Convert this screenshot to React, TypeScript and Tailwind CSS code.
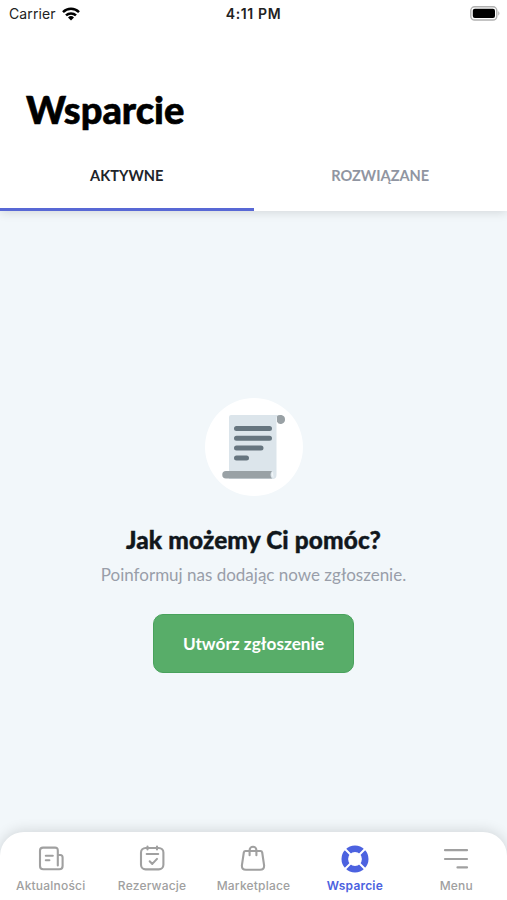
import { useState, type ReactNode } from "react";

const tabs = ["AKTYWNE", "ROZWIĄZANE"];

const NewsIcon = () => (
  <svg width="28" height="28" viewBox="0 0 28 28" fill="none" stroke="currentColor" strokeWidth="2.1" strokeLinecap="round" strokeLinejoin="round">
    <path d="M20.8 20.5V5.4Q20.8 2.6 18 2.6H6Q3 2.6 3 5.6V21Q3 24.3 6.3 24.3H22.3Q25.6 24.3 25.6 21V12.5Q25.6 10 23.2 10H20.8" />
    <path d="M8.8 10.7h7M8.8 15.3h3.600" />
  </svg>
);

const CalendarIcon = () => (
  <svg width="28" height="28" viewBox="0 0 28 28" fill="none" stroke="currentColor" strokeWidth="2.1" strokeLinecap="round" strokeLinejoin="round">
    <rect x="3" y="3" width="22.4" height="21.4" rx="4.6" />
    <path d="M9.500 1.500v3M19 1.500v3M8.700 9h11.500M11.700 16.300l2.600 2.600 4.700-5" />
  </svg>
);

const BagIcon = () => (
  <svg width="28" height="28" viewBox="0 0 28 28" fill="none" stroke="currentColor" strokeWidth="2.1" strokeLinecap="round" strokeLinejoin="round">
    <path d="M6.500 6h15q1.400 0 1.700 1.500l1.900 12.800q.3 4.500-4.100 4.500H7q-4.400 0-4.100-4.500L4.800 7.500Q5.100 6 6.500 6Z" />
    <path d="M10.600 10.300V5.200a3.400 3.400 0 0 1 6.800 0v5.100" />
  </svg>
);

const LifebuoyIcon = () => (
  <svg width="28" height="28" viewBox="0 0 28 28" fill="none">
    <circle cx="14" cy="14" r="10.2" stroke="currentColor" strokeWidth="6.6" />
    <path d="M4 4l6.5 6.5M24 4l-6.5 6.5M4 24l6.5-6.5M24 24l-6.5-6.5" stroke="#fff" strokeWidth="2" />
  </svg>
);

const MenuIcon = () => (
  <svg width="28" height="28" viewBox="0 0 28 28" fill="none" stroke="currentColor" strokeWidth="2.2" strokeLinecap="round">
    <path d="M3 5.200h22M3 14h22M15.500 22.400h9.500" />
  </svg>
);

const navItems: { name: string; icon: ReactNode }[] = [
  { name: "Aktualności", icon: <NewsIcon /> },
  { name: "Rezerwacje", icon: <CalendarIcon /> },
  { name: "Marketplace", icon: <BagIcon /> },
  { name: "Wsparcie", icon: <LifebuoyIcon /> },
  { name: "Menu", icon: <MenuIcon /> },
];

function StatusBar() {
  return (
    <div className="grid h-[27px] grid-cols-3 items-center font-['Inter',sans-serif] text-[14px] text-[#222]">
      <div className="flex items-center gap-[6px] pl-[9px]">
        <span className="tracking-[0.1px]">Carrier</span>
        <svg width="18" height="14" viewBox="0 0 18 14" fill="none" stroke="#000" strokeWidth="2.5">
          <path d="M1 5.1a11.5 11.5 0 0 1 16 0M4 8.4a7.2 7.2 0 0 1 10 0" />
          <path d="M9 13.4 6 10.5a4.3 4.3 0 0 1 6 0Z" fill="#000" stroke="none" />
        </svg>
      </div>
      <span className="text-center font-semibold tracking-[0.6px] whitespace-nowrap">4:11 PM</span>
      <svg className="mr-[6px] justify-self-end" width="31" height="15" viewBox="0 0 31 15">
        <rect x=".8" y=".8" width="26" height="13.2" rx="3.8" fill="#fff" stroke="#b0b0b0" strokeWidth="1.4" />
        <rect x="2.8" y="2.8" width="22.2" height="9.2" rx="2" fill="#000" />
        <path d="M28.3 5q2.3 2.4 0 4.8Z" fill="#aaa" />
      </svg>
    </div>
  );
}

function ScrollIllustration() {
  return (
    <div className="flex size-[98px] items-center justify-center rounded-full bg-white">
      <svg width="64" height="66" viewBox="0 0 64 66">
        <path d="M55 1h4.500q3.500 1 3.500 4.300a4.300 4.300 0 0 1-8 2.500Z" fill="#99a1a5" />
        <path d="M9 1H58q-3.500 0-3.500 4V61q0 4-4 4H7V3q0-2 2-2Z" fill="#dce5eb" />
        <path d="M4 57H50q-3 3.500 0 7.500H4a3.750 3.750 0 0 1 0-7.500Z" fill="#99a1a5" />
        <path d="M51 57.500q-3 3 .5 6.500Z" fill="#f1f6f9" />
        <path d="M14.500 14.500H47.500M14.500 24.300H47.500M14.500 34H39M14.500 44H24.500" stroke="#66757f" strokeWidth="5" strokeLinecap="round" />
      </svg>
    </div>
  );
}

export default function App() {
  const [activeTab, setActiveTab] = useState(0);
  const [activeNav, setActiveNav] = useState("Wsparcie");

  return (
    <div className="flex h-screen flex-col overflow-hidden bg-[#f2f7fa] font-['Lato',sans-serif]">
      <header className="relative h-[211px] shrink-0 bg-white shadow-[0_1px_10px_rgba(0,0,0,0.14)]">
        <StatusBar />
        <h1 className="mt-[59px] pl-[26px] text-[38px] leading-[46px] font-black text-black [-webkit-text-stroke:0.6px_#000]">
          Wsparcie
        </h1>
        <div className="mt-[9px] grid h-[70px] grid-cols-2">
          {tabs.map((tab, i) => (
            <button
              key={tab}
              onClick={() => setActiveTab(i)}
              className={`border-b-[3px] pt-[3px] text-[14.6px] font-bold ${
                activeTab === i ? "border-[#5868d5] text-[#20242a]" : "border-transparent text-[#9095a1]"
              }`}
            >
              {tab}
            </button>
          ))}
        </div>
      </header>

      {/* Empty state */}
      <main className="flex flex-1 flex-col items-center pt-[187px]">
        <ScrollIllustration />
        <h2 className="mt-[29px] text-[24.4px] leading-[30px] font-black tracking-[0.14px] text-[#11171c] [-webkit-text-stroke:0.4px_#11171c]">
          Jak możemy Ci pomóc?
        </h2>
        <p className="mt-[8px] text-[17px] leading-[24px] text-[#999ea9]">Poinformuj nas dodając nowe zgłoszenie.</p>
        <button className="mt-[27px] h-[59px] w-[201px] rounded-[10px] border border-[#49a25c] bg-[#58ad69] text-[17.200px] font-bold text-white">
          Utwórz zgłoszenie
        </button>
      </main>

      <nav className="grid h-[68px] shrink-0 grid-cols-5 rounded-t-[24px] bg-white shadow-[0_-1px_14px_rgba(0,0,0,0.14)]">
        {navItems.map((item) => (
          <button
            key={item.name}
            onClick={() => setActiveNav(item.name)}
            className={`flex flex-col items-center pt-[13px] font-['Inter',sans-serif] text-[12px] leading-[16px] tracking-[0.2px] ${
              activeNav === item.name ? "font-semibold text-[#4c62e0]" : "font-medium text-[#a0a0a0]"
            }`}
          >
            {item.icon}
            <span className="mt-[5px]">{item.name}</span>
          </button>
        ))}
      </nav>
    </div>
  );
}
